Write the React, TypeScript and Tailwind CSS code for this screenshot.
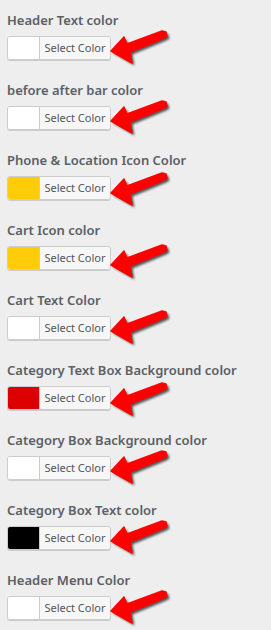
const fields = [
  { label: "Header Text color", color: "bg-white", dy: 0 },
  { label: "before after bar color", color: "bg-white", dy: 0 },
  { label: "Phone & Location Icon Color", color: "bg-[#ffcc0a]", dy: 2 },
  { label: "Cart Icon color", color: "bg-[#ffcc0a]", dy: 4 },
  { label: "Cart Text Color", color: "bg-white", dy: 0 },
  { label: "Category Text Box Background color", color: "bg-[#dd0000]", dy: 2 },
  { label: "Category Box Background color", color: "bg-white", dy: 0 },
  { label: "Category Box Text color", color: "bg-black", dy: 0 },
  { label: "Header Menu Color", color: "bg-white", dy: 0 },
];

function Arrow() {
  const pts = "1,25 14,11 17,18 52,5 56,6 57,10 54,12 20,26 22,37";
  return (
    <svg width="64" height="44" viewBox="0 0 64 44" className="-ml-[1px] shrink-0">
      <defs>
        <filter id="sh" x="-20%" y="-20%" width="140%" height="140%">
          <feGaussianBlur stdDeviation="1.2" />
        </filter>
      </defs>
      <polygon points={pts} fill="#222" opacity="0.75" transform="translate(2.5,2.5)" filter="url(#sh)" strokeLinejoin="round" />
      <polygon points={pts} fill="#ff0000" stroke="#ff0000" strokeWidth="1.5" strokeLinejoin="round" />
    </svg>
  );
}

export default function App() {
  return (
    <div className="min-h-[630px] w-[271px] bg-[#eeeeee] pl-[7px] pt-[10px] font-['Noto_Sans',sans-serif]">
      {fields.map((f) => (
        <div key={f.label} className="h-[70px]">
          <div className="text-[13px] font-semibold leading-[20px] text-[#5a6066] whitespace-nowrap">
            {f.label}
          </div>
          <div className="mt-[6px] flex h-[24px] items-center">
            <div className="flex h-[24px] w-[104px] shrink-0 overflow-hidden rounded-[3px] border border-[#cccccc] shadow-[0_1px_0_#cccccc]">
              <div className={`w-[31px] ${f.color}`} />
              <div className="flex flex-1 items-center justify-center border-l border-[#cccccc] bg-[#f7f7f7] text-[11px] text-[#555555]">
                Select Color
              </div>
            </div>
            <div className="flex h-[24px] items-center" style={{ marginTop: f.dy * 2 }}>
              <Arrow />
            </div>
          </div>
        </div>
      ))}
    </div>
  );
}
